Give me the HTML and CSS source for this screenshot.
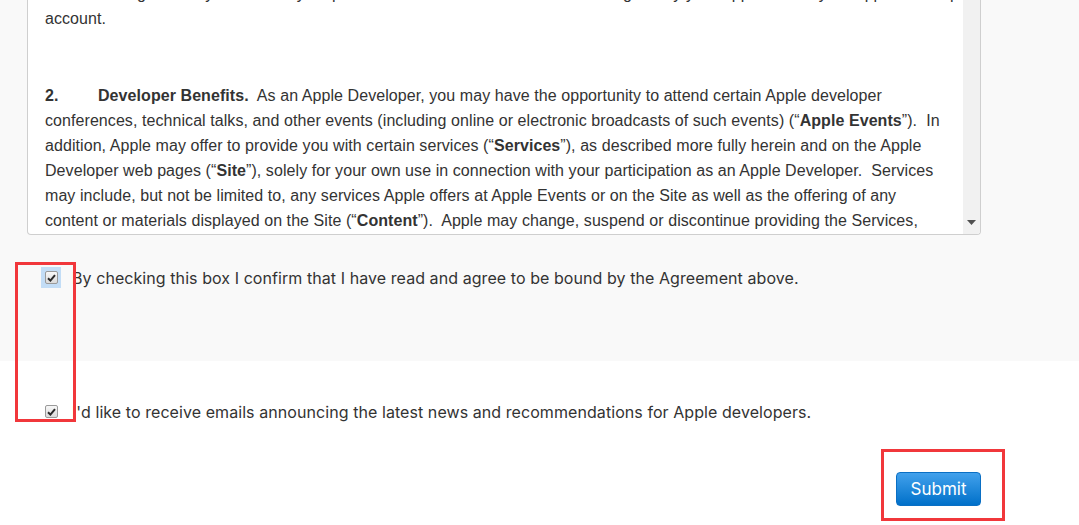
FILE: index.html
```html
<!DOCTYPE html>
<html>
<head>
<meta charset="utf-8">
<link rel="stylesheet" href="styles.css">
</head>
<body>
<section class="agree-section">
  <div class="agreement">
    <div class="agreement-text">
      <div class="scroller">
        <p class="para">You further agree that you are solely responsible for all activities conducted through or by your Apple ID and your Apple Developer<br>account.</p>
        <p class="para"><span class="num">2.</span><b>Developer Benefits.</b>&nbsp; As an Apple Developer, you may have the opportunity to attend certain Apple developer<br>conferences, technical talks, and other events (including online or electronic broadcasts of such events) (“<b>Apple Events</b>”).&nbsp; In<br>addition, Apple may offer to provide you with certain services (“<b>Services</b>”), as described more fully herein and on the Apple<br>Developer web pages (“<b>Site</b>”), solely for your own use in connection with your participation as an Apple Developer.&nbsp; Services<br>may include, but not be limited to, any services Apple offers at Apple Events or on the Site as well as the offering of any<br>content or materials displayed on the Site (“<b>Content</b>”).&nbsp; Apple may change, suspend or discontinue providing the Services,</p>
      </div>
    </div>
    <div class="scrollbar">
      <svg class="arrow" width="9" height="5" viewBox="0 0 9 5"><path d="M0 0H9L4.5 5Z" fill="#505050"/></svg>
    </div>
  </div>
  <label class="check-row">
    <span class="check focused"><span class="box"><svg width="9" height="8" viewBox="0 0 9 8"><path d="M1 4.3L3.4 6.6L8 1.2" fill="none" stroke="#2a2a2a" stroke-width="2"/></svg></span></span>
    <span class="check-label">By checking this box I confirm that I have read and agree to be bound by the Agreement above.</span>
  </label>
</section>
<section class="final-section">
  <label class="check-row">
    <span class="check"><span class="box"><svg width="9" height="8" viewBox="0 0 9 8"><path d="M1 4.3L3.4 6.6L8 1.2" fill="none" stroke="#2a2a2a" stroke-width="2"/></svg></span></span>
    <span class="check-label">I'd like to receive emails announcing the latest news and recommendations for Apple developers.</span>
  </label>
  <div class="actions">
    <button class="submit">Submit</button>
  </div>
</section>
<div class="annot annot-checks"></div>
<div class="annot annot-submit"></div>
</body>
</html>
```

FILE: styles.css
```css
html, body {
  margin: 0;
  padding: 0;
  background: #fff;
}
body {
  width: 1079px;
  height: 525px;
  overflow: hidden;
  position: relative;
  color: #333;
}
.agree-section {
  background: #f9f9f9;
  height: 361px;
  box-sizing: border-box;
  padding: 0 98px 0 27px;
}
.agreement {
  display: flex;
  height: 235px;
  box-sizing: border-box;
  background: #fff;
  border: 1px solid #cfcfcf;
  border-top: none;
  border-radius: 0 0 4px 4px;
  overflow: hidden;
}
.agreement-text {
  flex: 1;
  overflow: hidden;
  padding-left: 17px;
}
.scroller {
  margin-top: -19px;
  font-family: "Liberation Sans", Arial, sans-serif;
  font-size: 16px;
  line-height: 25px;
  letter-spacing: 0.07px;
  color: #333;
  white-space: nowrap;
}
.para {
  margin: 0 0 52px;
}
.num {
  display: inline-block;
  width: 53px;
  font-weight: bold;
  letter-spacing: 0;
}
.scrollbar {
  width: 17px;
  background: #f1f1f1;
  display: flex;
  align-items: flex-end;
  justify-content: center;
  padding-bottom: 9px;
  box-sizing: border-box;
}
.check-row {
  display: flex;
  align-items: center;
  height: 21px;
  font-family: "Inter", "Noto Sans", sans-serif;
  font-size: 16px;
  letter-spacing: 0.07px;
  color: #333;
}
.agree-section .check-row {
  margin-top: 32px;
}
.check {
  width: 20px;
  height: 21px;
  display: flex;
  align-items: center;
  justify-content: center;
  margin-left: 14px;
  margin-right: 11px;
}
.check.focused {
  background: #c3ddf6;
}
.box {
  width: 13px;
  height: 13px;
  box-sizing: border-box;
  border: 1px solid #9a9a9a;
  border-radius: 2px;
  background: linear-gradient(#f8f8f8, #dadada);
  display: flex;
  align-items: center;
  justify-content: center;
}
.final-section {
  padding: 40px 98px 0 27px;
}
.actions {
  display: flex;
  justify-content: flex-end;
  margin-top: 50px;
}
.submit {
  width: 85px;
  height: 34px;
  border: 1px solid #0a6fc4;
  border-radius: 4px;
  background: linear-gradient(#42a1ec, #0070c9);
  color: #fff;
  font-family: "Inter", "Noto Sans", sans-serif;
  font-size: 17px;
  padding: 0;
}
.annot {
  position: absolute;
  border: 3px solid #f1373b;
  box-sizing: border-box;
}
.annot-checks {
  left: 15px;
  top: 262px;
  width: 61px;
  height: 160px;
}
.annot-submit {
  left: 881px;
  top: 449px;
  width: 124px;
  height: 72px;
}
```
